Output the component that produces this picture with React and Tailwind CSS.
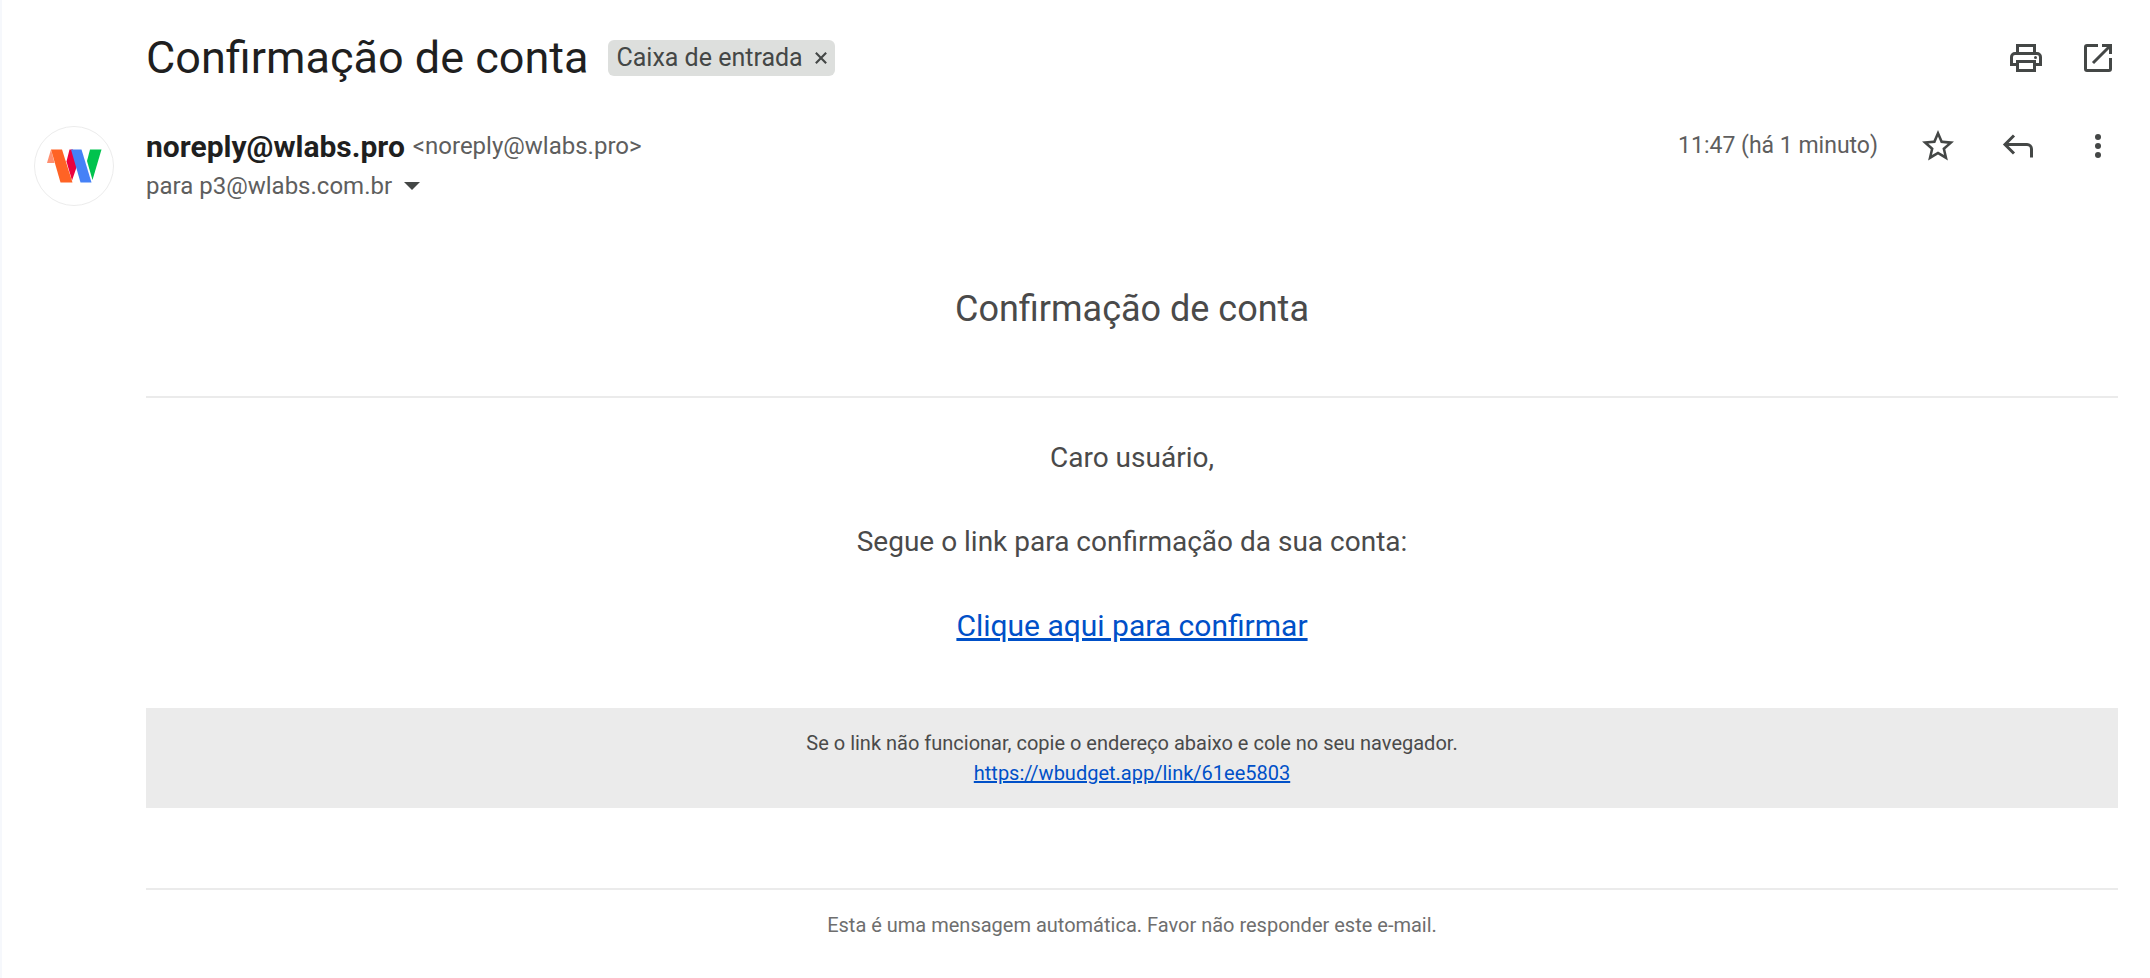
function LogoIcon() {
  return (
    <svg viewBox="0 0 80 80" className="size-20" aria-hidden="true">
      <circle cx="40" cy="40" r="39.5" fill="#fff" stroke="#ececec" />
      <path d="M17 23.5L13 37h7.500z" fill="#ff8f70" />
      <path d="M35.500 23.500H39L43 40l-5 14.500-5.500-19z" fill="#eb003f" />
      <path d="M17 23.500h11L38.500 56.500H26.500z" fill="#ff6325" />
      <path d="M37 23.500h10.500l10 33H46.500z" fill="#4581f7" />
      <path d="M56 23.500h11.500L58.500 54l-5.500-19z" fill="#00c34e" />
    </svg>
  );
}

function PrintIcon() {
  return (
    <svg viewBox="0 0 20 20" className="size-10" fill="none" stroke="currentColor" strokeWidth="1.5" aria-hidden="true">
      <path d="M5.750 7.500V3.750h8.500V7.500M5.500 13.250H2.750V9.500A1.750 1.750 0 0 1 4.500 7.750h11a1.750 1.750 0 0 1 1.750 1.750v3.750H14.500M5.750 11.750h8.500v4.500h-8.500z" />
      <circle cx="14.750" cy="9.750" r=".75" fill="currentColor" stroke="none" />
    </svg>
  );
}

function OpenIcon() {
  return (
    <svg viewBox="0 0 20 20" className="size-10" fill="none" stroke="currentColor" strokeWidth="1.5" aria-hidden="true">
      <path d="M10 3.750H4.500a.75.75 0 0 0-.75.75v11c0 .41.34.75.75.75h11a.75.75 0 0 0 .75-.75V10M12 3.750h4.250V8M16 4L7.500 12.500" />
    </svg>
  );
}

function StarIcon() {
  return (
    <svg viewBox="-.5 -.5 25 25" className="size-10" fill="currentColor" aria-hidden="true">
      <path d="M22 9.240l-7.190-.62L12 2 9.190 8.630 2 9.240l5.460 4.730L5.820 21 12 17.270 18.180 21l-1.630-7.030L22 9.240zM12 15.400l-3.760 2.270 1-4.280-3.320-2.880 4.380-.38L12 6.100l1.710 4.040 4.380.38-3.320 2.880 1 4.280L12 15.400z" />
    </svg>
  );
}

function ReplyIcon() {
  return (
    <svg viewBox="0 0 20 20" className="size-10" fill="none" stroke="currentColor" strokeWidth="1.5" aria-hidden="true">
      <path d="M8 4.750L3.500 9.250 8 13.750M3.500 9.250h11A2.250 2.250 0 0 1 16.750 11.500v4.250" />
    </svg>
  );
}

function MoreIcon() {
  return (
    <svg viewBox="0 0 20 20" className="size-10" fill="currentColor" aria-hidden="true">
      <circle cx="10" cy="5.500" r="1.500" />
      <circle cx="10" cy="10" r="1.500" />
      <circle cx="10" cy="14.500" r="1.500" />
    </svg>
  );
}

export default function App() {
  return (
    <main className="min-h-screen border-l-2 border-[#f6f8fc] bg-white px-8 font-[Roboto,sans-serif] text-[#444746]">
      <header className="flex items-center gap-5 pt-7 pl-28">
        <h1 className="text-[45px] leading-[60px] text-[#1f1f1f]">Confirmação de conta</h1>
        <div className="flex h-9 items-center gap-3 rounded-md bg-[#dddfdd] px-2 text-[25px]">
          <span>Caixa de entrada</span>
          <button aria-label="Remover marcador">
            <svg viewBox="0 0 14 14" className="size-3" fill="none" stroke="currentColor" strokeWidth="2.500" aria-hidden="true">
              <path d="M1 1l12 12M13 1L1 13" />
            </svg>
          </button>
        </div>
        <div className="ml-auto flex gap-8">
          <button aria-label="Imprimir"><PrintIcon /></button>
          <button aria-label="Abrir em nova janela"><OpenIcon /></button>
        </div>
      </header>

      <section className="flex pt-[38px]">
        <div className="w-28 shrink-0"><LogoIcon /></div>
        <div className="flex-1">
          <div className="flex h-10 items-center gap-2">
            <h2 className="text-[30px] font-bold text-[#1f1f1f]">noreply@wlabs.pro</h2>
            <span className="text-2xl text-[#5e5e5e]">&lt;noreply@wlabs.pro&gt;</span>
          </div>
          <div className="flex h-10 items-center gap-3 text-2xl text-[#5e5e5e]">
            <span>para p3@wlabs.com.br</span>
            <button aria-label="Mostrar detalhes">
              <svg viewBox="0 0 16 8" className="h-2 w-4" fill="#444746" aria-hidden="true"><path d="M0 0h16L8 8z" /></svg>
            </button>
          </div>
        </div>
        <div className="flex h-10 items-center">
          <span className="mr-10 text-[23px] text-[#5e5e5e]">11:47 (há 1 minuto)</span>
          <div className="flex gap-10">
            <button aria-label="Com estrela"><StarIcon /></button>
            <button aria-label="Responder"><ReplyIcon /></button>
            <button aria-label="Mais"><MoreIcon /></button>
          </div>
        </div>
      </section>

      <article className="ml-28 pt-20 text-center text-[#4a4a4a]">
        <h2 className="text-4xl leading-[46px]">Confirmação de conta</h2>
        <hr className="mt-16 border-t-2 border-[#ebebeb]" />
        <div className="flex flex-col gap-[42px] pt-[39px] pb-[61px] text-[28px] leading-[42px]">
          <p>Caro usuário,</p>
          <p>Segue o link para confirmação da sua conta:</p>
          <p className="text-[30px]">
            <a href="#confirmar" className="text-[#0050c8] underline">Clique aqui para confirmar</a>
          </p>
        </div>
        <div className="bg-[#ebebeb] py-5 text-xl leading-[30px]">
          <p>Se o link não funcionar, copie o endereço abaixo e cole no seu navegador.</p>
          <a href="https://wbudget.app/link/61ee5803" className="text-[#0050c8] underline">https://wbudget.app/link/61ee5803</a>
        </div>
        <hr className="mt-20 border-t-2 border-[#ebebeb]" />
        <p className="mt-5 text-xl leading-[30px] text-[#6e6e6e]">Esta é uma mensagem automática. Favor não responder este e-mail.</p>
      </article>
    </main>
  );
}
